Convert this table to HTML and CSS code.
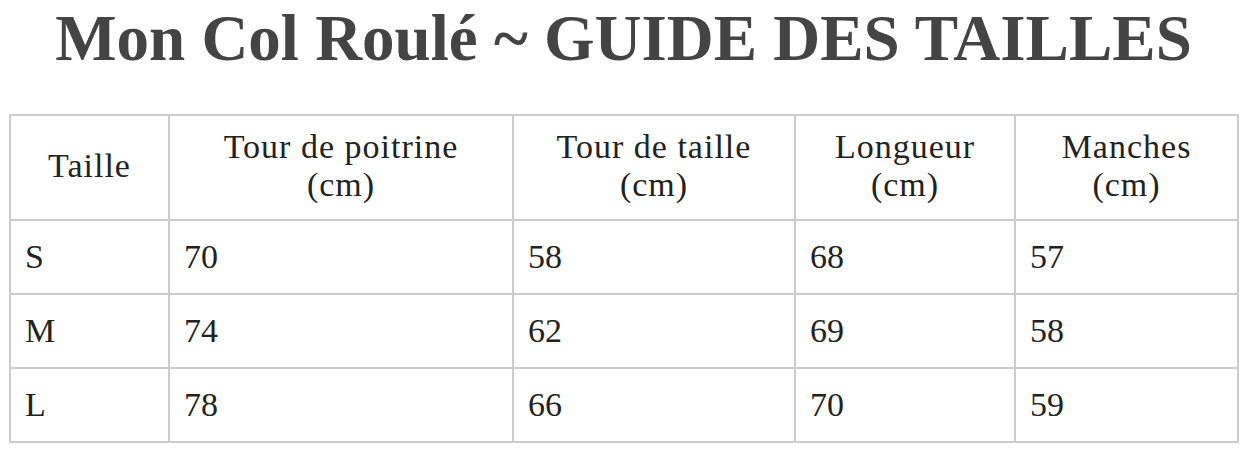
FILE: index.html
```html
<!DOCTYPE html>
<html lang="fr">
<head>
<meta charset="utf-8">
<title>Mon Col Roulé ~ Guide des tailles</title>
<link rel="stylesheet" href="styles.css">
</head>
<body>
<h1 class="title">Mon Col Roulé ~ GUIDE DES TAILLES</h1>
<table class="sizes">
  <colgroup>
    <col class="c1"><col class="c2"><col class="c3"><col class="c4"><col class="c5">
  </colgroup>
  <thead>
    <tr>
      <th>Taille</th>
      <th>Tour de poitrine<br>(cm)</th>
      <th>Tour de taille<br>(cm)</th>
      <th>Longueur<br>(cm)</th>
      <th>Manches<br>(cm)</th>
    </tr>
  </thead>
  <tbody>
    <tr><td>S</td><td>70</td><td>58</td><td>68</td><td>57</td></tr>
    <tr><td>M</td><td>74</td><td>62</td><td>69</td><td>58</td></tr>
    <tr><td>L</td><td>78</td><td>66</td><td>70</td><td>59</td></tr>
  </tbody>
</table>
</body>
</html>
```

FILE: styles.css
```css
html, body {
  margin: 0;
  padding: 0;
  background: #ffffff;
}
body {
  padding: 0 9px;
  font-family: "Liberation Serif", "DejaVu Serif", serif;
  color: #222;
}
.title {
  margin: 0;
  padding-top: 0;
  height: 114px;
  box-sizing: border-box;
  text-align: center;
  font-family: "Liberation Serif", serif;
  font-weight: 700;
  font-size: 65px;
  line-height: 76px;
  color: #444444;
}
.sizes {
  width: 1230px;
  border-collapse: collapse;
  border: 2px solid #cccccc;
  font-size: 34px;
  line-height: 38px;
}
.c1 { width: 159px; }
.c2 { width: 344px; }
.c3 { width: 282px; }
.c4 { width: 220px; }
.c5 { width: auto; }
.sizes th, .sizes td {
  border: 2px solid #cccccc;
  padding: 0 14px;
  font-weight: 400;
  color: #222;
}
.sizes th {
  height: 99px;
  text-align: center;
  vertical-align: middle;
  letter-spacing: 1px;
  padding-bottom: 4px;
}
.sizes td {
  height: 72px;
  text-align: left;
  vertical-align: middle;
}
```
